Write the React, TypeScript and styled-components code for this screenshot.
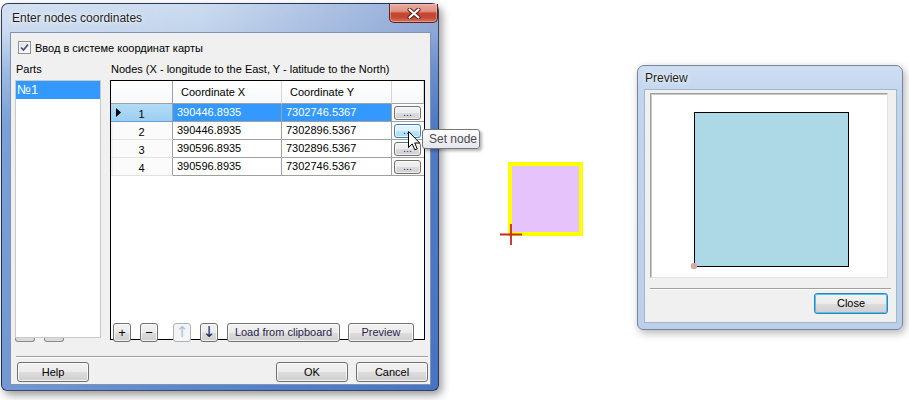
import React from "react";
import styled, { createGlobalStyle, css } from "styled-components";

const GlobalStyle = createGlobalStyle`
  html, body {
    margin: 0;
    padding: 0;
    background: #ffffff;
  }
  body {
    font-family: "Liberation Sans", Arial, sans-serif;
    font-size: 11px;
    color: #000;
  }
`;

type NodeRow = { id: number; x: string; y: string };

const nodes: NodeRow[] = [
  { id: 1, x: "390446.8935", y: "7302746.5367" },
  { id: 2, x: "390446.8935", y: "7302896.5367" },
  { id: 3, x: "390596.8935", y: "7302896.5367" },
  { id: 4, x: "390596.8935", y: "7302746.5367" },
];

export default function App() {
  return (
    <>
      <GlobalStyle />
      <Page>
        <MainWindow $tone="active" $w={438} $h={388}>
          <TitleBar $h={28} $pad={10}>
            <TitleText>Enter nodes coordinates</TitleText>
            <CloseBtn>
              <svg width="14" height="11" viewBox="0 0 14 11">
                <path d="M2.5 1.5 L11.5 9.5 M11.5 1.5 L2.5 9.5" stroke="#4a1a1a" strokeWidth="4" strokeLinecap="round" />
                <path d="M2.5 1.5 L11.5 9.5 M11.5 1.5 L2.5 9.5" stroke="#ffffff" strokeWidth="2.2" strokeLinecap="round" />
              </svg>
            </CloseBtn>
          </TitleBar>
          <Client $tone="active">
            <CheckRow>
              <CheckBox>
                <svg width="11" height="11" viewBox="0 0 11 11">
                  <path d="M2 5.5 L4.5 8 L9 2.5" stroke="#3d4f86" strokeWidth="1.7" fill="none" />
                </svg>
              </CheckBox>
              <span>Ввод в системе координат карты</span>
            </CheckRow>

            <Columns>
              <PartsColumn>
                <FieldLabel>Parts</FieldLabel>
                <PartsList>
                  <PartsItem $selected>№1</PartsItem>
                </PartsList>
                <PeekRow>
                  <PeekButton />
                  <PeekButton />
                </PeekRow>
              </PartsColumn>

              <NodesColumn>
                <FieldLabel>Nodes (X - longitude to the East, Y - latitude to the North)</FieldLabel>
                <GridBox>
                  <GridTable>
                    <HeadCell />
                    <HeadCell>Coordinate X</HeadCell>
                    <HeadCell>Coordinate Y</HeadCell>
                    <HeadCell />
                    {nodes.map((n, i) => (
                      <React.Fragment key={n.id}>
                        <RowHead $selected={i === 0}>
                          <Marker>
                            {i === 0 && (
                              <svg width="5" height="9" viewBox="0 0 5 9">
                                <path d="M0 0 L5 4.5 L0 9 Z" fill="#000" />
                              </svg>
                            )}
                          </Marker>
                          <RowNum>{n.id}</RowNum>
                        </RowHead>
                        <Cell $selected={i === 0}>{n.x}</Cell>
                        <Cell $selected={i === 0}>{n.y}</Cell>
                        <BtnCell>
                          <CellButton $hover={i === 1}>...</CellButton>
                        </BtnCell>
                      </React.Fragment>
                    ))}
                  </GridTable>

                  <ToolBar>
                    <WinButton $w={18} $fs={13}>+</WinButton>
                    <WinButton $w={18} $ml={9} $fs={13}>−</WinButton>
                    <WinButton $w={18} $ml={15} $fs={15} $glyph disabled>↑</WinButton>
                    <WinButton $w={18} $ml={9} $fs={15} $glyph $color="#1c2a70">↓</WinButton>
                    <WinButton $w={113} $ml={9} $color="#2a1f4a">Load from clipboard</WinButton>
                    <WinButton $w={66} $ml={8} $color="#2a1f4a">Preview</WinButton>
                  </ToolBar>

                  <Tooltip>Set node</Tooltip>
                  <Cursor width="13" height="20" viewBox="0 0 13 20">
                    <path
                      d="M0.5 0.5 L0.5 16.5 L4.2 12.9 L6.8 18.8 L9.2 17.8 L6.7 12 L11.7 12 Z"
                      fill="#fff"
                      stroke="#000"
                      strokeWidth="1"
                      strokeLinejoin="round"
                    />
                  </Cursor>
                </GridBox>
              </NodesColumn>
            </Columns>

            <Separator $ml={5} $mt={14} $w={412} />

            <DialogButtons $pl={6} $pr={2} $mt={4}>
              <WinButton $w={72} $h={20}>Help</WinButton>
              <Spacer />
              <WinButton $w={72} $h={20}>OK</WinButton>
              <WinButton $w={72} $h={20} $ml={8}>Cancel</WinButton>
            </DialogButtons>
          </Client>
        </MainWindow>

        <Shape>
          <Cross width="22" height="21" viewBox="0 0 22 21">
            <path d="M0 10.5 H22 M11 0 V21" stroke="#c42b2b" strokeWidth="1.8" />
          </Cross>
        </Shape>

        <PreviewWindow $tone="inactive" $w={266} $h={265}>
          <TitleBar $h={23} $pad={7}>
            <TitleText>Preview</TitleText>
          </TitleBar>
          <Client $tone="inactive">
            <PreviewPanel>
              <svg width="235" height="182" viewBox="0 0 235 182">
                <rect x="43.5" y="18.5" width="154" height="154" fill="#add8e6" stroke="#000" strokeWidth="1" />
                <circle cx="43" cy="172" r="3.2" fill="#d3aba4" />
              </svg>
            </PreviewPanel>
            <Separator $ml={5} $mt={10} $w={241} />
            <DialogButtons $pl={0} $pr={8} $mt={3}>
              <Spacer />
              <WinButton $w={74} $h={21} $default>Close</WinButton>
            </DialogButtons>
          </Client>
        </PreviewWindow>
      </Page>
    </>
  );
}

const Page = styled.div`
  width: 909px;
  height: 400px;
  display: flex;
  align-items: flex-start;
  overflow: hidden;
  background: #fff;
`;

const Window = styled.div<{ $tone: "active" | "inactive"; $w: number; $h: number }>`
  box-sizing: border-box;
  width: ${(p) => p.$w}px;
  height: ${(p) => p.$h}px;
  display: flex;
  flex-direction: column;
  flex-shrink: 0;
  border-radius: 7px 7px 6px 6px;
  ${(p) =>
    p.$tone === "active"
      ? css`
          border: 1px solid rgba(25, 35, 60, 0.8);
          background:
            linear-gradient(to right, rgba(255, 255, 255, 0.15) 0%, rgba(255, 255, 255, 0) 45%, rgba(40, 80, 170, 0.35) 100%),
            linear-gradient(to bottom, #cddcef 0px, #c2d4ec 28px, #8fb0e0 65px, #6390d1 120px, #5a86cc 100%);
          box-shadow: 3px 4px 9px rgba(0, 0, 0, 0.4);
        `
      : css`
          border: 1px solid #75859c;
          background: linear-gradient(to bottom, #cfdef2 0px, #c1d5ef 30px, #bcd0ec 100%);
          box-shadow: 2px 3px 8px rgba(0, 0, 0, 0.3);
        `}
`;

const MainWindow = styled(Window)`
  margin: 3px 0 0 1px;
`;

const PreviewWindow = styled(Window)`
  margin: 65px 0 0 54px;
`;

const TitleBar = styled.div<{ $h: number; $pad: number }>`
  height: ${(p) => p.$h}px;
  flex-shrink: 0;
  display: flex;
  align-items: flex-start;
  padding-left: ${(p) => p.$pad}px;
`;

const TitleText = styled.div`
  align-self: center;
  font-size: 12px;
  color: #1b1b1b;
  text-shadow: 0 0 6px rgba(255, 255, 255, 0.9), 0 0 2px rgba(255, 255, 255, 0.8);
`;

const CloseBtn = styled.div`
  margin-left: auto;
  margin-right: 0;
  width: 49px;
  height: 19px;
  box-sizing: border-box;
  display: flex;
  align-items: center;
  justify-content: center;
  border: 1px solid #5a2424;
  border-top: none;
  border-radius: 0 0 5px 5px;
  background: linear-gradient(to bottom, #e9ab9c 0%, #df9383 40%, #c7442f 52%, #c24a36 75%, #d8755c 100%);
  box-shadow: inset 0 0 0 1px rgba(255, 200, 190, 0.45);
`;

const Client = styled.div<{ $tone: "active" | "inactive" }>`
  flex: 1;
  display: flex;
  flex-direction: column;
  background: #f0f0f0;
  border: 1px solid ${(p) => (p.$tone === "active" ? "#7f93b3" : "#a3b6d0")};
  ${(p) =>
    p.$tone === "active"
      ? css`
          margin: 0 7px 5px 8px;
        `
      : css`
          margin: 0 5px 6px 6px;
        `}
`;

const CheckRow = styled.div`
  display: flex;
  align-items: center;
  gap: 4px;
  height: 13px;
  margin: 8px 0 0 7px;
`;

const CheckBox = styled.div`
  width: 13px;
  height: 13px;
  box-sizing: border-box;
  border: 1px solid #8e8f8f;
  background: linear-gradient(135deg, #dcdcdc 0%, #f4f4f4 60%, #ffffff 100%);
  box-shadow: inset 0 0 0 1px #f6f6f6;
  display: flex;
  align-items: center;
  justify-content: center;
`;

const Columns = styled.div`
  display: flex;
  gap: 9px;
  margin-top: 9px;
  padding-left: 4px;
`;

const PartsColumn = styled.div`
  width: 86px;
  display: flex;
  flex-direction: column;
`;

const NodesColumn = styled.div`
  width: 315px;
  display: flex;
  flex-direction: column;
`;

const FieldLabel = styled.div`
  height: 13px;
  line-height: 13px;
  padding-left: 1px;
  margin-bottom: 4px;
  white-space: nowrap;
`;

const PartsList = styled.div`
  height: 258px;
  box-sizing: border-box;
  border: 1px solid #c9c9c9;
  background: #fff;
`;

const PartsItem = styled.div<{ $selected?: boolean }>`
  height: 18px;
  line-height: 18px;
  padding-left: 1px;
  font-size: 13px;
  background: ${(p) => (p.$selected ? "#3399ff" : "transparent")};
  color: ${(p) => (p.$selected ? "#fff" : "#000")};
`;

const PeekRow = styled.div`
  display: flex;
  gap: 9px;
  height: 4px;
`;

const PeekButton = styled.div`
  width: 18px;
  height: 3px;
  border: 1px solid #8c8c8c;
  border-top: none;
  border-radius: 0 0 3px 3px;
  background: #dadada;
`;

const GridBox = styled.div`
  position: relative;
  height: 260px;
  box-sizing: border-box;
  border: 1px solid #000;
  background: #fff;
  display: flex;
  flex-direction: column;
`;

const GridTable = styled.div`
  display: grid;
  grid-template-columns: 62px 109px 110px 1fr;
  grid-template-rows: 23px repeat(4, 18px);
`;

const HeadCell = styled.div`
  box-sizing: border-box;
  border-right: 1px solid #d5d5d5;
  border-bottom: 1px solid #a0a0a0;
  background: linear-gradient(to bottom, #ffffff 0%, #f7f8fa 100%);
  padding-left: 8px;
  display: flex;
  align-items: center;
  white-space: nowrap;
  &:first-child {
    border-right-color: #a0a0a0;
  }
`;

const RowHead = styled.div<{ $selected?: boolean }>`
  box-sizing: border-box;
  display: flex;
  align-items: center;
  padding-right: 12px;
  border-right: 1px solid #a0a0a0;
  border-bottom: 1px solid ${(p) => (p.$selected ? "#6c9fcf" : "#e2e2e2")};
  background: ${(p) =>
    p.$selected ? "linear-gradient(to bottom, #b2dbf6 0%, #9ccff2 100%)" : "linear-gradient(to right, #eeeeee 0, #fbfbfb 3px)"};
`;

const Marker = styled.div`
  width: 12px;
  display: flex;
  justify-content: center;
  padding-left: 2px;
  box-sizing: border-box;
`;

const RowNum = styled.div`
  flex: 1;
  text-align: center;
  padding-top: 2px;
`;

const Cell = styled.div<{ $selected?: boolean }>`
  box-sizing: border-box;
  border-right: 1px solid #a0a0a0;
  border-bottom: 1px solid #a0a0a0;
  padding-left: 4px;
  line-height: 17px;
  white-space: nowrap;
  overflow: hidden;
  background: ${(p) => (p.$selected ? "#3399ff" : "#fff")};
  color: ${(p) => (p.$selected ? "#fff" : "#000")};
`;

const BtnCell = styled.div`
  box-sizing: border-box;
  border-bottom: 1px solid #a0a0a0;
  padding: 2px 0 0 2px;
`;

const CellButton = styled.div<{ $hover?: boolean }>`
  width: 27px;
  height: 14px;
  box-sizing: border-box;
  border: 1px solid ${(p) => (p.$hover ? "#3c7fb1" : "#707070")};
  border-radius: 3px;
  font-size: 11px;
  line-height: 10px;
  text-align: center;
  color: #3d2585;
  background: ${(p) =>
    p.$hover
      ? "linear-gradient(to bottom, #eaf6fd 0%, #d9f0fc 50%, #bee6fd 50%, #a7d9f5 100%)"
      : "linear-gradient(to bottom, #f2f2f2 0%, #ebebeb 50%, #dddddd 50%, #cfcfcf 100%)"};
  box-shadow: inset 0 0 0 1px rgba(255, 255, 255, 0.7);
`;

const ToolBar = styled.div`
  margin-top: auto;
  margin-bottom: -3px;
  padding-left: 2px;
  display: flex;
  height: 19px;
`;

const WinButton = styled.button<{
  $w: number;
  $h?: number;
  $ml?: number;
  $fs?: number;
  $glyph?: boolean;
  $color?: string;
  $default?: boolean;
}>`
  width: ${(p) => p.$w}px;
  height: ${(p) => p.$h ?? 19}px;
  margin: 0 0 0 ${(p) => p.$ml ?? 0}px;
  padding: 0;
  box-sizing: border-box;
  flex-shrink: 0;
  overflow: hidden;
  font-family: ${(p) => (p.$glyph ? '"DejaVu Sans", sans-serif' : '"Liberation Sans", Arial, sans-serif')};
  font-size: ${(p) => p.$fs ?? 11}px;
  line-height: 1;
  color: ${(p) => p.$color ?? "#000"};
  border: 1px solid ${(p) => (p.$default ? "#3c7fb1" : "#707070")};
  border-radius: 3px;
  background: linear-gradient(to bottom, #f2f2f2 0%, #ebebeb 50%, #dddddd 50%, #cfcfcf 100%);
  box-shadow: inset 0 0 0 1px ${(p) => (p.$default ? "#48c8f8" : "rgba(255, 255, 255, 0.75)")};
  &:disabled {
    border-color: #adb2b5;
    background: #f4f4f4;
    color: #a8c4dc;
    box-shadow: none;
  }
`;

const Tooltip = styled.div`
  position: absolute;
  left: 311px;
  top: 48px;
  width: 58px;
  height: 20px;
  box-sizing: border-box;
  border: 1px solid #767676;
  border-radius: 3px;
  background: linear-gradient(to bottom, #ffffff 0%, #e4e5f0 100%);
  box-shadow: 2px 2px 3px rgba(0, 0, 0, 0.3);
  font-size: 12px;
  line-height: 18px;
  color: #4c4c4c;
  padding-left: 6px;
  white-space: nowrap;
`;

const Cursor = styled.svg`
  position: absolute;
  left: 297px;
  top: 50px;
`;

const Separator = styled.div<{ $ml: number; $mt: number; $w: number }>`
  width: ${(p) => p.$w}px;
  margin: ${(p) => p.$mt}px 0 0 ${(p) => p.$ml}px;
  border-top: 1px solid #a0a0a0;
  border-bottom: 1px solid #ffffff;
`;

const DialogButtons = styled.div<{ $pl: number; $pr: number; $mt: number }>`
  display: flex;
  margin-top: ${(p) => p.$mt}px;
  padding: 0 ${(p) => p.$pr}px 0 ${(p) => p.$pl}px;
`;

const Spacer = styled.div`
  flex: 1;
`;

const Shape = styled.div`
  position: relative;
  flex-shrink: 0;
  margin: 162px 0 0 69px;
  width: 75px;
  height: 74px;
  box-sizing: border-box;
  border: 4px solid #ffff00;
  background: #e6c3fa;
`;

const Cross = styled.svg`
  position: absolute;
  left: -12px;
  top: 58px;
`;

const PreviewPanel = styled.div`
  width: 238px;
  height: 185px;
  box-sizing: border-box;
  margin: 3px 0 0 5px;
  background: #fff;
  border: 1px solid;
  border-color: #a0a0a0 #e3e3e3 #e3e3e3 #a0a0a0;
  box-shadow: inset 1px 1px 0 #c8c8c8;
  svg {
    display: block;
  }
`;
